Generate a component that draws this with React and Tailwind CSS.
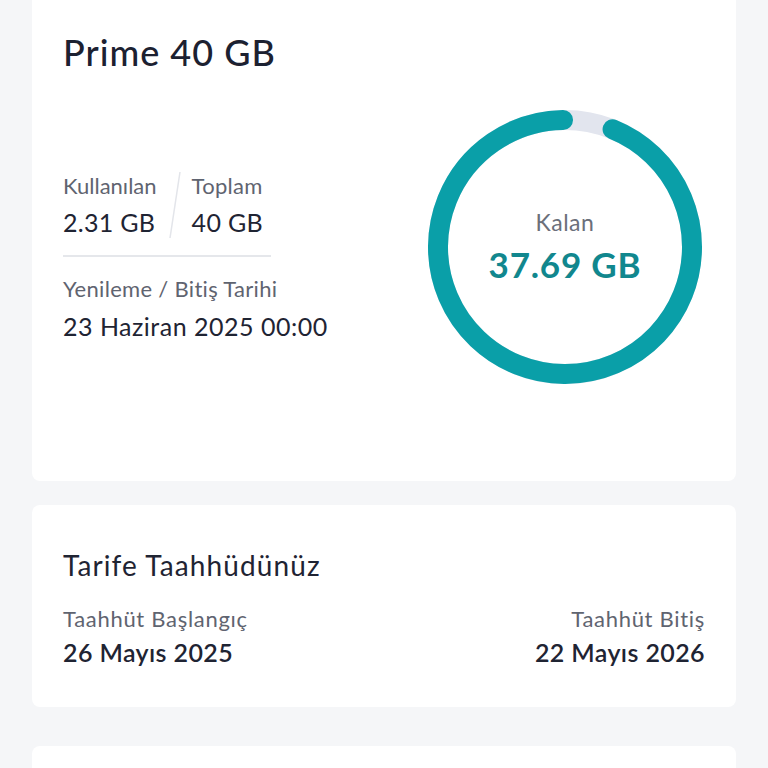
import React from "react";

const Ring = ({ used, total }) => {
  const r = 127;
  const c = 2 * Math.PI * r;
  const dash = c * 0.936;
  return (
    <div className="relative w-[274px] h-[274px] shrink-0">
      <svg width="274" height="274" viewBox="0 0 274 274">
        <circle cx="137" cy="137" r={r} fill="none" stroke="#e2e5ee" strokeWidth="20" />
        <circle
          cx="137"
          cy="137"
          r={r}
          fill="none"
          stroke="#0a9fa8"
          strokeWidth="20"
          strokeLinecap="round"
          strokeDasharray={`${dash} ${c}`}
          transform="rotate(-68 137 137)"
        />
      </svg>
      <div className="absolute inset-0 flex flex-col items-center justify-center pb-[2px]">
        <div className="text-[23px] leading-[28px] tracking-[0.5px] text-[#6b6f7a]">Kalan</div>
        <div className="text-[35px] leading-[40px] tracking-[0.8px] font-bold text-[#11878e] mt-[8px]">
          {(total - used).toFixed(2)} GB
        </div>
      </div>
    </div>
  );
};

const App = () => {
  return (
    <div
      className="min-h-screen bg-[#f5f6f8] px-[32px] flex flex-col overflow-hidden h-[768px]"
      style={{ fontFamily: "Lato, 'Noto Sans', sans-serif" }}
    >
      {/* paket karti */}
      <div className="bg-white rounded-b-[8px] h-[481px] pl-[31px] pr-[34px] pt-[30px] shrink-0">
        <h1 className="text-[36px] leading-[44px] tracking-[1px] font-medium text-[#1c2131]">Prime 40 GB</h1>
        <div className="flex justify-between items-start mt-[36px]">
          <div className="mt-[62px]">
            <div className="flex">
              <div>
                <div className="text-[22px] leading-[28px] text-[#5f6470]">Kullanılan</div>
                <div className="text-[25px] leading-[32px] tracking-[0.3px] text-[#1f2433] mt-[6px]">2.31 GB</div>
              </div>
              <svg width="12" height="66" className="ml-[12px] mr-[11px]">
                <line x1="11" y1="0" x2="1" y2="66" stroke="#e3e5ea" strokeWidth="1.5" />
              </svg>
              <div>
                <div className="text-[22px] leading-[28px] tracking-[0.3px] text-[#5f6470]">Toplam</div>
                <div className="text-[25px] leading-[32px] tracking-[0.3px] text-[#1f2433] mt-[6px]">40 GB</div>
              </div>
            </div>
            <div className="w-[208px] h-[2px] bg-[#e5e7eb] mt-[17px]" />
            <div className="text-[22px] leading-[28px] tracking-[0.3px] text-[#5f6470] mt-[18px]">Yenileme / Bitiş Tarihi</div>
            <div className="text-[25px] leading-[32px] tracking-[0.5px] text-[#1f2433] mt-[7px]">23 Haziran 2025 00:00</div>
          </div>
          <Ring used={2.31} total={40} />
        </div>
      </div>

      {/* taahhut karti */}
      <div className="bg-white rounded-[8px] h-[202px] mt-[24px] px-[31px] pt-[42px] shrink-0">
        <div className="text-[28px] leading-[36px] tracking-[1.1px] text-[#1f2433]">Tarife Taahhüdünüz</div>
        <div className="flex justify-between mt-[22px]">
          <div>
            <div className="text-[22px] leading-[28px] tracking-[0.7px] text-[#5f6470]">Taahhüt Başlangıç</div>
            <div className="text-[25px] leading-[32px] tracking-[0.4px] font-semibold text-[#1f2433] mt-[3px]">26 Mayıs 2025</div>
          </div>
          <div className="text-right">
            <div className="text-[22px] leading-[28px] tracking-[0.7px] text-[#5f6470]">Taahhüt Bitiş</div>
            <div className="text-[25px] leading-[32px] tracking-[0.4px] font-semibold text-[#1f2433] mt-[3px]">22 Mayıs 2026</div>
          </div>
        </div>
      </div>

      <div className="bg-white rounded-[8px] h-[120px] mt-[39px] shrink-0" />
    </div>
  );
};

export default App;
